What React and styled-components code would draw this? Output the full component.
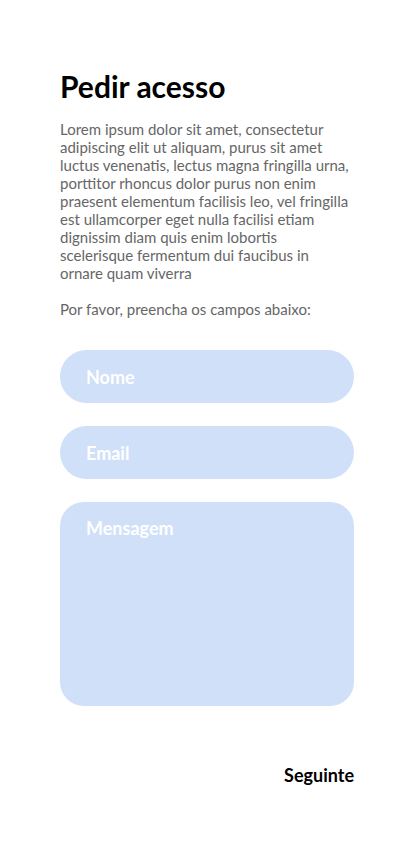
import React from 'react';
import styled, { createGlobalStyle } from 'styled-components';

const GlobalStyle = createGlobalStyle`
  body {
    margin: 0;
    background: #ffffff;
    font-family: Lato, "Noto Sans", sans-serif;
  }
`;

const Page = styled.div`
  display: flex;
  flex-direction: column;
  padding: 66px 60px 0;
  min-height: 859px;
  box-sizing: border-box;
`;

const Title = styled.h1`
  margin: 0 0 14px;
  font-size: 30px;
  line-height: 40px;
  font-weight: 700;
  color: #000000;
`;

const Text = styled.p`
  margin: 0 0 18px;
  font-size: 15px;
  line-height: 18px;
  color: #666666;
`;

const Form = styled.form`
  display: flex;
  flex-direction: column;
  gap: 23px;
  margin-top: 14px;
`;

const Field = styled.input`
  height: 53px;
  border: none;
  border-radius: 27px;
  background: #d0e0f8;
  padding: 0 26px;
  font-family: Lato, "Noto Sans", sans-serif;
  font-size: 18px;
  font-weight: 700;
  color: #333333;
  outline: none;

  &::placeholder {
    color: #ffffff;
    opacity: 1;
  }
`;

const Message = styled.textarea`
  height: 204px;
  border: none;
  border-radius: 24px;
  background: #d0e0f8;
  padding: 15px 26px;
  box-sizing: border-box;
  font-family: Lato, "Noto Sans", sans-serif;
  font-size: 18px;
  line-height: 22px;
  font-weight: 700;
  color: #333333;
  resize: none;
  outline: none;

  &::placeholder {
    color: #ffffff;
    opacity: 1;
  }
`;

const Footer = styled.div`
  display: flex;
  justify-content: flex-end;
  margin-top: 58px;
`;

const NextButton = styled.button`
  border: none;
  background: none;
  padding: 0;
  font-family: Lato, "Noto Sans", sans-serif;
  font-size: 18px;
  line-height: 22px;
  font-weight: 700;
  color: #000000;
  cursor: pointer;
`;

const App = () => {
  return (
    <>
      <GlobalStyle />
      <Page>
        <Title>Pedir acesso</Title>
        <Text>
          Lorem ipsum dolor sit amet, consectetur adipiscing elit ut aliquam, purus sit amet
          luctus venenatis, lectus magna fringilla urna, porttitor rhoncus dolor purus non enim
          praesent elementum facilisis leo, vel fringilla est ullamcorper eget nulla facilisi
          etiam dignissim diam quis enim lobortis scelerisque fermentum dui faucibus in ornare
          quam viverra
        </Text>
        <Text>Por favor, preencha os campos abaixo:</Text>
        <Form onSubmit={(e) => e.preventDefault()}>
          <Field type="text" placeholder="Nome" />
          <Field type="email" placeholder="Email" />
          <Message placeholder="Mensagem" />
        </Form>
        <Footer>
          <NextButton type="button">Seguinte</NextButton>
        </Footer>
      </Page>
    </>
  );
};

export default App;
